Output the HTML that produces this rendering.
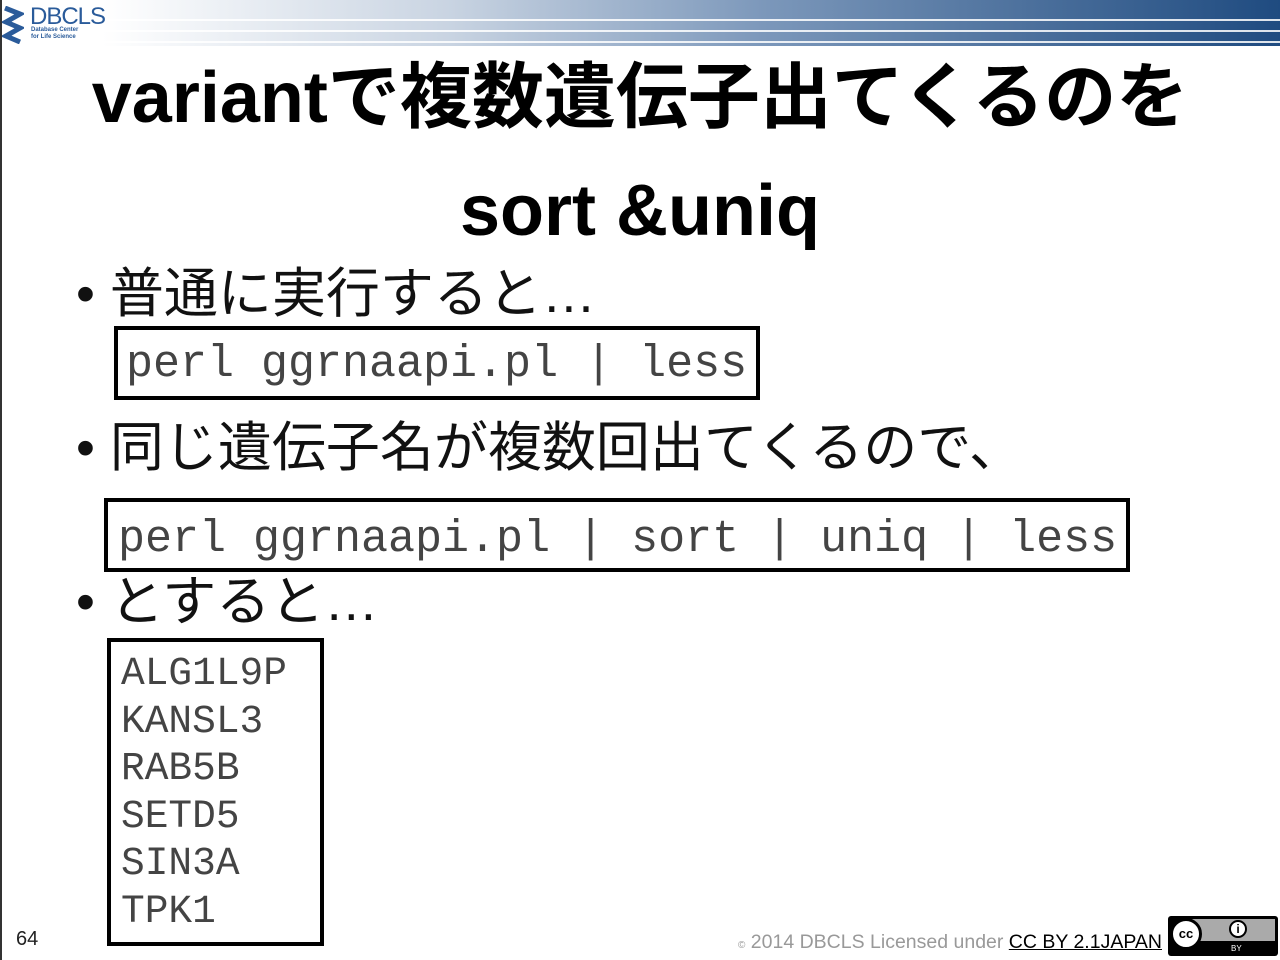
<!DOCTYPE html>
<html><head><meta charset="utf-8"><style>
body{margin:0;width:1280px;height:960px;background:#fff;position:relative;overflow:hidden;font-family:"Liberation Sans","Noto Sans CJK JP",sans-serif;}
.hdr{position:absolute;left:0;top:0;width:1280px;height:46px;background:linear-gradient(90deg,#fff 8%,#c9d4e2 35%,#7b97ba 60%,#1f4b80 100%);}
.ln{position:absolute;left:40px;right:0;height:2px;background:rgba(255,255,255,.85);}
.t{position:absolute;left:0;width:1280px;text-align:center;font-weight:bold;font-size:72px;color:#000;white-space:nowrap;}
.b{position:absolute;font-size:54px;color:#111;white-space:nowrap;}
.box{position:absolute;border:4px solid #000;box-sizing:border-box;font-family:"Liberation Mono","DejaVu Sans Mono",monospace;color:#444;white-space:pre;}
</style></head><body>
<div class="hdr">
<div class="ln" style="top:19px"></div><div class="ln" style="top:30px"></div><div class="ln" style="top:41px"></div>
</div>
<div style="position:absolute;left:0;top:0;width:2px;height:960px;background:#333"></div>
<svg style="position:absolute;left:2px;top:6px" width="22" height="38" viewBox="0 0 22 38"><path d="M3 2 L18 8 L4 16 L18 22 L4 30 L18 36" stroke="#2a5b9a" stroke-width="5" fill="none"/></svg>
<div style="position:absolute;left:30px;top:3px;font-size:24px;color:#2a5b9a;letter-spacing:-1px">DBCLS</div>
<div style="position:absolute;left:31px;top:27px;font-size:6px;line-height:7px;color:#2a5b9a;font-weight:bold">Database Center<br>for Life Science</div>
<div class="t" style="top:38px">variantで複数遺伝子出てくるのを</div>
<div class="t" style="top:170px">sort &amp;uniq</div>
<div class="b" style="left:76px;top:249px">• 普通に実行すると…</div>
<div class="box" style="left:114px;top:326px;width:646px;height:74px;font-size:45px;line-height:70px;padding-left:8px">perl ggrnaapi.pl | less</div>
<div class="b" style="left:76px;top:403px">• 同じ遺伝子名が複数回出てくるので、</div>
<div class="box" style="left:104px;top:498px;width:1026px;height:74px;font-size:45px;line-height:76px;padding-left:10px">perl ggrnaapi.pl | sort | uniq | less</div>
<div class="b" style="left:76px;top:557px">• とすると…</div>
<div class="box" style="left:107px;top:638px;width:217px;height:308px;font-size:39.5px;line-height:47.5px;padding:8px 0 0 10px">ALG1L9P
KANSL3
RAB5B
SETD5
SIN3A
TPK1</div>
<div style="position:absolute;left:16px;top:928px;font-size:20px;color:#222">64</div>
<div style="position:absolute;left:738px;top:931px;font-size:19.5px;color:#999;white-space:nowrap"><span style="font-size:10px">©</span> 2014 DBCLS Licensed under <span style="color:#000;text-decoration:underline">CC BY 2.1JAPAN</span></div>
<div style="position:absolute;left:1168px;top:916px;width:110px;height:40px;background:#000;border-radius:3px"></div>
<div style="position:absolute;left:1190px;top:919px;width:85px;height:22px;background:#aaa"></div>
<div style="position:absolute;left:1170px;top:918px;width:32px;height:32px;border-radius:50%;background:#fff;border:3px solid #000;box-sizing:border-box;font-size:13px;font-weight:bold;text-align:center;line-height:26px">cc</div>
<div style="position:absolute;left:1229px;top:920px;width:18px;height:18px;border-radius:50%;background:#fff;border:2px solid #000;box-sizing:border-box;font-size:12px;font-weight:bold;text-align:center;line-height:14px">i</div>
<div style="position:absolute;left:1231px;top:944px;font-size:8px;color:#fff">BY</div>
</body></html>
